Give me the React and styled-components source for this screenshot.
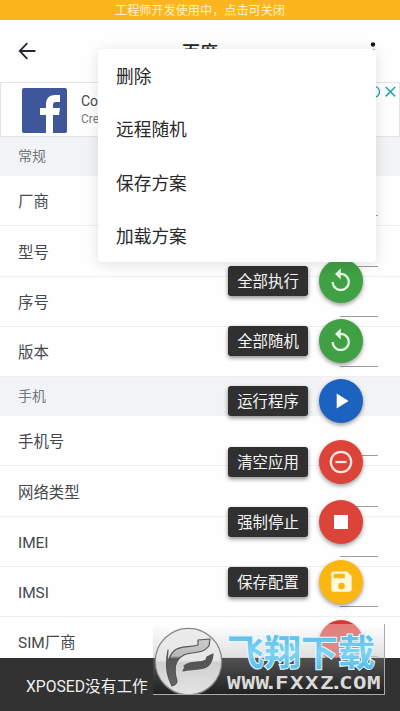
import React from 'react';
import styled, { createGlobalStyle } from 'styled-components';

const Global = createGlobalStyle`
  * { box-sizing: border-box; }
  body { margin: 0; overflow: hidden; background: #fefefe; }
`;

const Screen = styled.div`
  position: relative;
  width: 400px;
  height: 711px;
  overflow: hidden;
  background: #fefefe;
  color: #45484d;
  font-family: Roboto, 'Noto Sans CJK SC', sans-serif;
  white-space: nowrap;
`;

const Notice = styled.div`
  height: 20px;
  padding-top: 2px;
  background: #fdb51e;
  color: #fff3cf;
  font-size: 12.15px;
  line-height: 19px;
  text-align: center;
`;

const Header = styled.header`
  display: flex;
  align-items: center;
  justify-content: space-between;
  height: 62px;
  padding: 0 18px;
`;

const Title = styled.h1`
  margin: 0;
  padding-top: 3px;
  color: #222;
  font-size: 18px;
  font-weight: 500;
  line-height: 24px;
`;

const Ad = styled.section`
  display: flex;
  align-items: flex-start;
  height: 55px;
  padding: 5px 2px 0 21px;
  border: 1px solid #e2e5e8;
`;

const AdCopy = styled.div`
  flex: 1;
  padding: 4px 0 0 14px;
`;

const AdTitle = styled.div`
  font-size: 14px;
  line-height: 18px;
`;

const AdText = styled.div`
  color: #77797c;
  font-size: 12px;
  line-height: 19px;
`;

const Section = styled.h2`
  height: 39px;
  margin: 0;
  padding-left: 18px;
  background: #f2f3f5;
  color: #73767a;
  font-size: 14px;
  font-weight: 400;
  line-height: 39px;
`;

const Row = styled.div`
  display: flex;
  align-items: flex-end;
  justify-content: space-between;
  height: 50.25px;
  padding: 0 22px 9px 18px;
  border-bottom: 1px solid #eeeeee;
`;

const RowLabel = styled.span`
  font-size: 15.4px;
  line-height: 27px;
`;

const Field = styled.span`
  width: 38px;
  height: 1px;
  background: #9c9c9c;
`;

const Actions = styled.div`
  position: absolute;
  top: 259px;
  right: 37px;
  display: flex;
  flex-direction: column;
  align-items: flex-end;
  gap: 16.2px;
`;

const Action = styled.div`
  display: flex;
  align-items: center;
  gap: 11px;
`;

const Tip = styled.span`
  width: 80px;
  height: 30px;
  border-radius: 3px;
  background: #303030;
  box-shadow: 0 2px 4px rgba(0, 0, 0, 0.45);
  color: #f5f5f5;
  font-size: 15.4px;
  line-height: 32px;
  text-align: center;
`;

const Fab = styled.span`
  display: grid;
  place-items: center;
  width: 44px;
  height: 44px;
  border-radius: 50%;
  background: ${(p) => p.$color};
  box-shadow: 0 2px 4px rgba(0, 0, 0, 0.4);
`;

const Menu = styled.nav`
  position: absolute;
  top: 49px;
  left: 98px;
  width: 278px;
  height: 213px;
  padding-top: 1px;
  border-radius: 4px;
  background: #fff;
  box-shadow: 0 2px 14px rgba(0, 0, 0, 0.12);
`;

const MenuItem = styled.div`
  height: 53.3px;
  padding-left: 18px;
  color: #292929;
  font-size: 17.7px;
  line-height: 54px;
`;

const Snackbar = styled.div`
  position: absolute;
  left: 0;
  right: 0;
  bottom: 0;
  height: 53px;
  padding-left: 26px;
  background: #323232;
  color: #efefef;
  font-size: 15.7px;
  line-height: 57px;
`;

const Watermark = styled.div`
  position: absolute;
  left: 153px;
  top: 624px;
  width: 232px;
  height: 71px;
  border-right: 1px solid #aaa;
  border-bottom: 1px solid #aaa;
  background: linear-gradient(rgba(255, 255, 255, 0.35) 0, rgba(205, 205, 205, 0.6) 33px, rgba(120, 120, 120, 0.45) 34px, rgba(25, 25, 25, 0.65) 70px);
`;

const Back = () => (
  <svg width="18" height="18" viewBox="0 0 18 18" fill="none" stroke="#26282d" strokeWidth="1.8">
    <path d="M9.3 1.2L1.7 9l7.6 7.8M1.7 9H17.5" />
  </svg>
);

const Dots = () => (
  <svg width="18" height="18" viewBox="0 0 18 18" fill="#171717">
    <circle cx="9" cy="2.5" r="2.2" />
    <circle cx="9" cy="9" r="2.2" />
    <circle cx="9" cy="15.5" r="2.2" />
  </svg>
);

const Facebook = () => (
  <svg width="45" height="45" viewBox="0 0 45 45">
    <rect width="45" height="45" rx="2" fill="#3e579b" />
    <path fill="#fff" d="M24 45V27h-6v-7h6v-4c0-6 4-9 9-9h5v7h-4c-2 0-3 1-3 3v3h7l-1 7h-6v18z" />
  </svg>
);

const AdChoices = () => (
  <svg width="28" height="16" viewBox="0 0 28 16" fill="none" stroke="#26a3ad" strokeWidth="1.3">
    <circle cx="5" cy="3.8" r="5.5" transform="translate(0 0)" />
    <path strokeWidth="1.6" d="M16.7 -1l9.4 9.4M26.1 -1l-9.4 9.4" />
  </svg>
);

const AdControls = styled.div`
  padding-top: 0;

  svg {
    display: block;
    overflow: visible;
  }
`;

const Replay = () => (
  <svg width="27.5" height="27.5" viewBox="0 0 24 24" fill="#e6f5e4">
    <path d="M12 5V1L7 6l5 5V7c3.31 0 6 2.69 6 6s-2.69 6-6 6-6-2.69-6-6H4c0 4.42 3.58 8 8 8s8-3.58 8-8-3.58-8-8-8z" />
  </svg>
);

const Play = () => (
  <svg width="26" height="26" viewBox="0 0 24 24" fill="#fff"><path d="M8 5v14l11-7z" /></svg>
);

const Minus = () => (
  <svg width="26" height="26" viewBox="0 0 26 26" fill="none" stroke="#ffe9e7" strokeWidth="2.2">
    <circle cx="13" cy="13" r="10.2" />
    <path d="M7.5 13h11" />
  </svg>
);

const Stop = () => (
  <svg width="26" height="26" viewBox="0 0 26 26" fill="#fff"><path d="M6 6h14v14H6z" /></svg>
);

const Save = () => (
  <svg width="27" height="27" viewBox="0 0 24 24" fill="#fff9df">
    <path d="M17 3H5a2 2 0 0 0-2 2v14a2 2 0 0 0 2 2h14a2 2 0 0 0 2-2V7l-4-4zm-5 16a3 3 0 1 1 0-6 3 3 0 0 1 0 6zm3-10H5V5h10v4z" />
  </svg>
);

const Brand = () => (
  <svg width="231" height="70" viewBox="0 0 231 70">
    <defs>
      <linearGradient id="disc" x1="0" y1="0" x2="0" y2="1">
        <stop offset="0" stopColor="#ececec" />
        <stop offset=".48" stopColor="#e6e6e6" />
        <stop offset=".52" stopColor="#cfcfcf" />
        <stop offset="1" stopColor="#e4e4e4" />
      </linearGradient>
      <linearGradient id="dark" x1="0" y1="0" x2="0" y2="1">
        <stop offset="0" stopColor="#cccccc" />
        <stop offset=".36" stopColor="#b9b9b9" />
        <stop offset=".42" stopColor="#555" />
        <stop offset="1" stopColor="#666" />
      </linearGradient>
      <linearGradient id="sky" x1="0" y1="0" x2="0" y2="1">
        <stop offset="0" stopColor="#45b2e2" />
        <stop offset=".55" stopColor="#7fd3f2" />
        <stop offset="1" stopColor="#45b5e4" />
      </linearGradient>
    </defs>
    <circle cx="35.5" cy="37.5" r="33.2" fill="url(#disc)" stroke="#868686" strokeWidth="1.2" />
    <g stroke="#555" strokeWidth="1.2" strokeLinejoin="round">
      <path fill="url(#dark)" d="M15 26c-1 9-2 20 1 29l3 7c3-1 5-3 5-5-4-13-1-22 7-26 8-4 18 0 25-9l1-7-12 1v5c-9 3-18 0-24 6-7 7-8 17-5 28-3-8-3-19-1-29z" />
      <path fill="#555" d="M31 42c7-6 15-2 22-6l1-3 6-3c-1 11-6 14-14 15-6 1-11 0-16 2l2-4z" />
    </g>
    <text x="74" y="42" textLength="148" lengthAdjust="spacingAndGlyphs" fontFamily="'Noto Sans CJK SC', sans-serif" fontSize="36" fontWeight="700" fill="url(#sky)" stroke="#e8f8ff" strokeWidth="2" paintOrder="stroke">飞翔下载</text>
    <text transform="scale(1.25 1)" x="59.2 70.8 82 88.8 97.6 109.6 121.6 133.6 141.2 148.8 160 171.2" y="65" fontFamily="'DejaVu Sans Mono', monospace" fontSize="18" fontWeight="700" fill="#dadada">WWW.FXXZ.COM</text>
  </svg>
);

const fields = (labels) => labels.map((label) => (
  <Row key={label}><RowLabel>{label}</RowLabel><Field /></Row>
));

const actions = [
  ['全部执行', '#3fa044', Replay],
  ['全部随机', '#3fa044', Replay],
  ['运行程序', '#1b62c1', Play],
  ['清空应用', '#dc4339', Minus],
  ['强制停止', '#dc4339', Stop],
  ['保存配置', '#fbb710', Save],
];

export default function App() {
  return (
    <Screen>
      <Global />
      <Notice>工程师开发使用中，点击可关闭</Notice>
      <Header><Back /><Title>百度</Title><Dots /></Header>
      <Ad>
        <Facebook />
        <AdCopy><AdTitle>Co</AdTitle><AdText>Cre</AdText></AdCopy>
        <AdControls><AdChoices /></AdControls>
      </Ad>
      <Section>常规</Section>
      {fields(['厂商', '型号', '序号', '版本'])}
      <Section>手机</Section>
      {fields(['手机号', '网络类型', 'IMEI', 'IMSI', 'SIM厂商'])}
      <Actions>
        {actions.map(([label, color, Icon]) => (
          <Action key={label}><Tip>{label}</Tip><Fab $color={color}><Icon /></Fab></Action>
        ))}
        <Fab $color="#d93831" />
      </Actions>
      <Menu>
        {['删除', '远程随机', '保存方案', '加载方案'].map((t) => <MenuItem key={t}>{t}</MenuItem>)}
      </Menu>
      <Snackbar>XPOSED没有工作</Snackbar>
      <Watermark><Brand /></Watermark>
    </Screen>
  );
}
